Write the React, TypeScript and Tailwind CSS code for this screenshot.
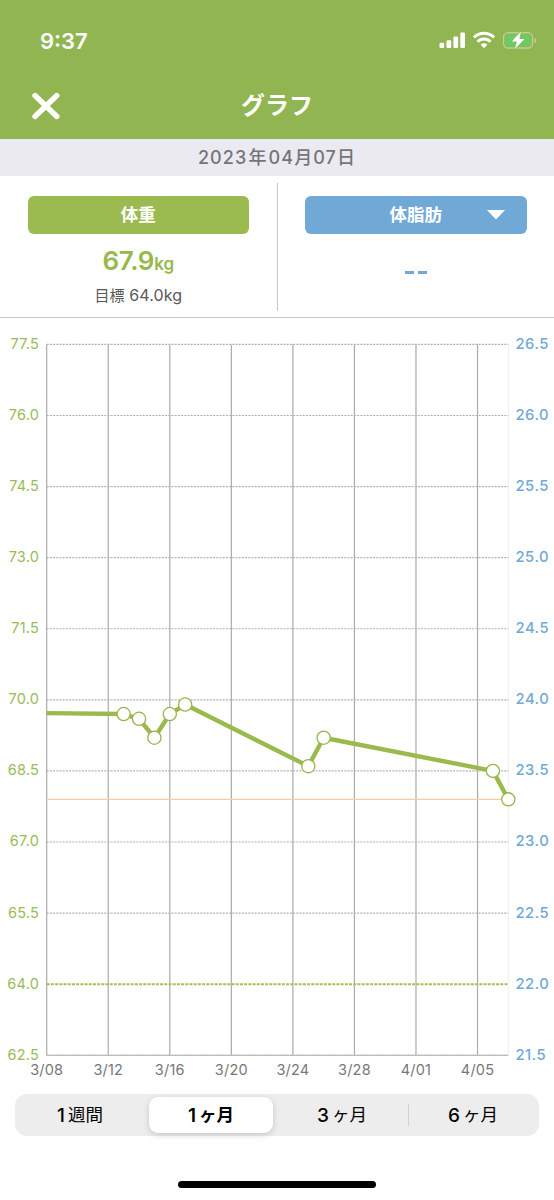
import { useState } from "react";
import clsx from "clsx";

// Plot area inside the chart svg
const LEFT = 46.7;
const TOP = 26.4;
const DAY = 15.387;
const KG = 47.39;
const RIGHT = LEFT + DAY * 30;
const BOTTOM = TOP + KG * 15;

const weightTicks = ["77.5", "76.0", "74.5", "73.0", "71.5", "70.0", "68.5", "67.0", "65.5", "64.0", "62.5"];
const fatTicks = ["26.5", "26.0", "25.5", "25.0", "24.5", "24.0", "23.5", "23.0", "22.5", "22.0", "21.5"];
const dates = ["3/08", "3/12", "3/16", "3/20", "3/24", "3/28", "4/01", "4/05"];

// Days since 3/08
const records = [
  { day: 5, kg: 69.7 },
  { day: 6, kg: 69.6 },
  { day: 7, kg: 69.2 },
  { day: 8, kg: 69.7 },
  { day: 9, kg: 69.9 },
  { day: 17, kg: 68.6 },
  { day: 18, kg: 69.2 },
  { day: 29, kg: 68.5 },
  { day: 30, kg: 67.9 },
];

const toX = (day: number) => LEFT + day * DAY;
const toY = (kg: number) => TOP + (77.5 - kg) * KG;

const StatusBar = () => (
  <div className="flex h-[80px] items-center justify-between pl-[40px] pr-[16px]">
    <span className="pt-px text-[22px] font-semibold leading-none">9:37</span>
    <svg width="100" height="20" viewBox="0 0 100 20" fill="none">
      {/* signal */}
      <g fill="white">
        <rect x="1.5" y="12.8" width="4.7" height="5.2" rx="1.2" />
        <rect x="8.5" y="10.2" width="4.7" height="7.8" rx="1.2" />
        <rect x="15.4" y="6.4" width="4.7" height="11.6" rx="1.2" />
        <rect x="22.3" y="2.4" width="4.7" height="15.6" rx="1.2" />
      </g>
      {/* wifi */}
      <g stroke="white" strokeWidth="3">
        <path d="M36 7.4a14.3 14.3 0 0 1 20 0" />
        <path d="M39.6 11.7a9 9 0 0 1 12.8 0" />
      </g>
      <path d="M42.7 14.8a5 5 0 0 1 6.6 0L46 18.2z" fill="white" />
      {/* battery */}
      <rect x="65.6" y="2.7" width="29" height="15.3" rx="4.5" stroke="#bcd094" strokeWidth="1.4" />
      <rect x="67.7" y="4.7" width="24.8" height="11.3" rx="2.8" fill="#68cd67" />
      <path d="M96.4 7.8c2.4.8 2.4 4.4 0 5.2z" fill="#bcd094" />
      <path
        d="M82.9 1.6 73.8 11.4h5l-1.9 7.5 9.6-10h-5.1z"
        fill="white"
        stroke="#7fbf58"
        strokeWidth="1.8"
        paintOrder="stroke"
      />
    </svg>
  </div>
);

const Header = () => (
  <header className="h-[139px] bg-[#91b551] text-white">
    <StatusBar />
    <div className="grid h-[52px] grid-cols-[92px_1fr_92px] items-center">
      <button aria-label="close" className="pl-[32px]">
        <svg width="28" height="28" viewBox="0 0 28 28" stroke="white" strokeWidth="5.4" strokeLinecap="round">
          <path d="M3 3.5 24.8 24.5M24.8 3.5 3 24.5" />
        </svg>
      </button>
      <h1 className="text-center text-[24px] font-bold leading-none">グラフ</h1>
    </div>
  </header>
);

const Summary = () => (
  <section className="flex h-[142px] border-b border-[#c8c8ca]">
    <div className="flex flex-1 flex-col items-center px-[27.5px] pt-[20px]">
      <div className="flex h-[38px] w-full items-center justify-center rounded-[6px] bg-[#9bba4f] text-[17.5px] font-bold text-white">
        体重
      </div>
      <p className="mt-[13px] text-[26px] font-semibold leading-[28px] tracking-[-0.3px] text-[#96b94a]">
        67.9<span className="text-[17px] tracking-normal">kg</span>
      </p>
      <p className="mt-[5px] text-[16px] leading-[24px] tracking-[0.1px] text-[#58585a]">
        <span className="text-[15px]">目標</span> 64.0kg
      </p>
    </div>
    <div className="mt-[7px] h-[128px] w-px bg-[#c8c8ca]" />
    <div className="flex flex-1 flex-col items-center px-[27.5px] pt-[20px]">
      <button className="grid h-[38px] w-full grid-cols-[40px_1fr_40px] items-center rounded-[6px] bg-[#70a9d6] text-[17.5px] font-bold text-white">
        <span className="col-start-2">体脂肪</span>
        <svg width="18" height="10" viewBox="0 0 18 10" fill="white">
          <path d="M0 0h18L9 9.5z" />
        </svg>
      </button>
      <p className="mt-[37px] flex gap-[4px]" aria-label="--">
        <span className="h-[3px] w-[9px] bg-[#74a8d0]" />
        <span className="h-[3px] w-[9px] bg-[#74a8d0]" />
      </p>
    </div>
  </section>
);

const Chart = () => {
  const line = [`${LEFT},${toY(69.72)}`, ...records.map((r) => `${toX(r.day)},${toY(r.kg)}`)].join(" ");

  return (
    <svg width="554" height="776" viewBox="0 0 554 776" className="block">
      {dates.map((date, i) => (
        <g key={date}>
          <line x1={toX(i * 4)} x2={toX(i * 4)} y1={TOP} y2={BOTTOM} stroke="#aaaaaa" strokeWidth="1.2" />
          <text x={toX(i * 4)} y="757" textAnchor="middle" fontSize="14.5" letterSpacing="0.2" fill="#777779">
            {date}
          </text>
        </g>
      ))}
      <line x1={RIGHT} x2={RIGHT} y1={TOP} y2={BOTTOM} stroke="#f1efeb" />

      {weightTicks.map((tick, i) => {
        const y = TOP + i * 1.5 * KG;
        const isGoal = tick === "64.0";
        return (
          <g key={tick}>
            <line
              x1={LEFT}
              x2={RIGHT}
              y1={y}
              y2={y}
              stroke={isGoal ? "#a5c058" : "#b0b0b0"}
              strokeWidth={isGoal ? 2 : 1.2}
              strokeDasharray={isGoal ? "3 1.2" : "2 1.2"}
            />
            <text x="39" y={y + 4.5} textAnchor="end" fontSize="14.5" letterSpacing="0.2" fill="#9bbb57">
              {tick}
            </text>
            <text x="515.5" y={y + 4.5} fontSize="14.8" fontWeight="500" letterSpacing="0.5" fill="#72a9d4">
              {fatTicks[i]}
            </text>
          </g>
        );
      })}
      <line x1={LEFT} x2={RIGHT} y1={BOTTOM} y2={BOTTOM} stroke="#b4b4b4" />

      {/* latest weight */}
      <line x1={LEFT} x2={RIGHT} y1="481.4" y2="481.4" stroke="#f9caa4" strokeWidth="1.3" />

      <polyline points={line} fill="none" stroke="#9bba4d" strokeWidth="4.4" strokeLinejoin="round" />
      {records.map((r) => (
        <circle key={r.day} cx={toX(r.day)} cy={toY(r.kg)} r="6.6" fill="white" stroke="#98b54d" strokeWidth="1.3" />
      ))}
    </svg>
  );
};

const periods = [
  { num: "1", unit: "週間" },
  { num: "1", unit: "ヶ月" },
  { num: "3", unit: "ヶ月" },
  { num: "6", unit: "ヶ月" },
];

const PeriodTabs = () => {
  const [active, setActive] = useState(1);

  return (
    <nav className="mx-[15px] grid h-[42px] grid-cols-4 items-center rounded-[12px] bg-[#ededee]">
      {periods.map((period, i) => (
        <div key={i} className="flex h-full items-center py-[3px]">
          <div className={clsx("h-[22px] w-px", i === 3 ? "bg-[#d2d2d4]" : "bg-transparent")} />
          <button
            onClick={() => setActive(i)}
            className={clsx(
              "flex h-full flex-1 items-center justify-center gap-[3px] text-[17.5px] leading-none text-black",
              i === active
                ? "mr-[4px] ml-[2px] rounded-[9px] bg-white font-bold shadow-[0_2px_6px_rgba(0,0,0,0.16)]"
                : "pr-[2px] font-normal"
            )}
          >
            <span className={clsx("text-[19px]", i === active ? "font-semibold" : "font-medium")}>{period.num}</span>
            {period.unit}
          </button>
        </div>
      ))}
    </nav>
  );
};

export default function App() {
  return (
    <div className="flex h-[1200px] w-[554px] flex-col overflow-hidden bg-white font-[Inter,'Noto_Sans_CJK_JP',sans-serif]">
      <Header />
      <div className="flex h-[37px] items-center justify-center bg-[#ebeaf1] text-[18px] font-medium tracking-[1.1px] text-[#757579]">
        2023<span className="mx-px text-[18px]">年</span>04<span className="text-[18px]">月</span>07
        <span className="text-[18px]">日</span>
      </div>
      <Summary />
      <Chart />
      <PeriodTabs />
      <div className="mx-auto mt-[45px] h-[7px] w-[198px] rounded-full bg-black" />
    </div>
  );
}
